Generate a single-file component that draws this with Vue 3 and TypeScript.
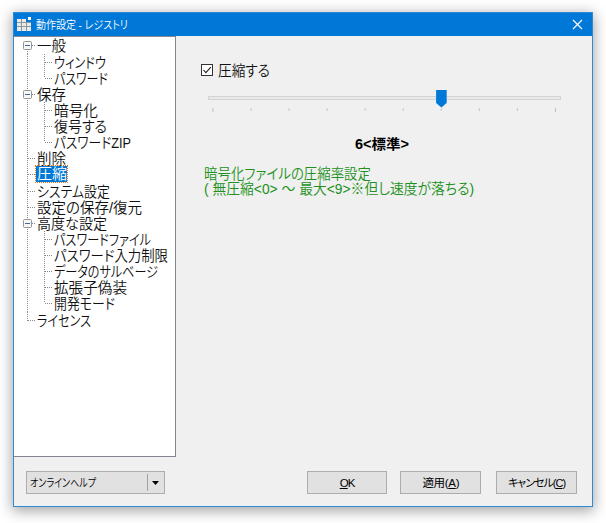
<script setup lang="ts">
import { h, ref } from 'vue'

interface TextProps { t: string; w: number; s?: number }

// Condensed UI label: the line is fitted to the width of the dialog's bitmap font.
const Label = (props: TextProps) => {
  const size = props.s ?? 14.5
  return h('svg', { class: 'label', width: props.w, height: 16 }, [
    h('text', { x: 0, y: 8 + size * 0.38, 'font-size': size, fill: 'currentColor', textLength: props.w, lengthAdjust: 'spacingAndGlyphs' }, props.t),
  ])
}
Label.props = ['t', 'w', 's']

interface Node { text: string; w: number; child?: boolean; open?: boolean; last?: boolean }
const nodes: Node[] = [
  { text: '一般', w: 29, open: true },
  { text: 'ウィンドウ', w: 52, child: true },
  { text: 'パスワード', w: 54, child: true, last: true },
  { text: '保存', w: 29, open: true },
  { text: '暗号化', w: 44, child: true },
  { text: '復号する', w: 53, child: true },
  { text: 'パスワードZIP', w: 77, child: true, last: true },
  { text: '削除', w: 29 },
  { text: '圧縮', w: 30 },
  { text: 'システム設定', w: 73 },
  { text: '設定の保存/復元', w: 105 },
  { text: '高度な設定', w: 70, open: true },
  { text: 'パスワードファイル', w: 97, child: true },
  { text: 'パスワード入力制限', w: 114, child: true },
  { text: 'データのサルベージ', w: 104, child: true },
  { text: '拡張子偽装', w: 73, child: true },
  { text: '開発モード', w: 61, child: true, last: true },
  { text: 'ライセンス', w: 54 },
]
const selected = ref('圧縮')
const compress = ref(true)
const level = ref(6)
</script>

<template>
  <div class="desktop">
    <section class="window">
      <header class="titlebar">
        <svg class="logo" width="15" height="15" viewBox="0 0 15 15">
          <g fill="#eceae6">
            <path d="M0 2h4v3H0zM5 2h4v3H5zM0 6h4v3H0zM5 6h4v3H5zM10 6h4v3h-4zM0 10h4v4H0zM5 10h4v4H5zM10 10h4v4h-4z" />
            <path d="M11 0h3v3h-3z" fill="#fff" />
          </g>
          <path d="M4.5 2v12M9.5 5v9M0 5.5h14M0 9.5h14" stroke="#8c969e" stroke-width="1" />
        </svg>
        <Label class="title" t="動作設定 - レジストリ" :w="92" :s="11.7" />
        <svg class="close" width="11" height="11" viewBox="0 0 11 11"><path d="M1 1l9 9M10 1l-9 9" stroke="#fff" stroke-width="1.15" /></svg>
      </header>
      <div class="body">
        <nav class="tree">
          <div v-for="(n, i) in nodes" :key="n.text" class="node" :class="{ child: n.child, active: n.text === selected }" @click="selected = n.text">
            <svg class="guide" :width="n.child ? 38 : 21" height="16.14">
              <g stroke="#8a8a8a" stroke-width="1" stroke-dasharray="1 1" fill="none">
                <path :d="`M13.5 ${i === 0 ? 8 : 0}V${i === nodes.length - 1 ? 9 : 17}`" />
                <path v-if="!n.child" d="M14 8.5H21" />
                <path v-else :d="`M30.5 0V${n.last ? 8 : 17}M31 8.5H38`" />
              </g>
              <template v-if="n.open">
                <rect x="9.5" y="4.5" width="8" height="8" rx="1" fill="#f7f7f7" stroke="#969696" />
                <path d="M11 8.5h5" stroke="#4664a8" />
              </template>
            </svg>
            <span class="caption"><Label :t="n.text" :w="n.w" /></span>
          </div>
        </nav>
        <main class="pane">
          <div class="check" @click="compress = !compress">
            <svg width="12" height="12" viewBox="0 0 12 12">
              <rect x=".5" y=".5" width="11" height="11" fill="#fff" stroke="#333" />
              <path v-if="compress" d="M2.5 6l2.4 2.6L9.8 3.2" fill="none" stroke="#222" stroke-width="1.1" />
            </svg>
            <Label t="圧縮する" :w="52" />
          </div>
          <svg class="slider" width="354" height="24" viewBox="0 0 354 24">
            <rect x=".5" y="6.5" width="352" height="3" fill="#e7eaea" stroke="#d3d3d3" />
            <path v-for="k in 10" :key="k" :d="`M${5 + (k - 1) * 38.05} ${k === 1 || k === 10 ? 18 : 18.4}v${k === 1 || k === 10 ? 4 : 2.4}`" stroke="#bdbdbd" />
            <path :d="`M${5 + level * 38.05 - 5.2} 0h10.6v13l-5.3 4.5-5.3-4.5z`" fill="#0078d7" />
          </svg>
          <div class="value"><Label :t="`${level}<標準>`" :w="54" :s="14" /></div>
          <div class="note">
            <Label t="暗号化ファイルの圧縮率設定" :w="167" :s="14.3" />
            <Label t="( 無圧縮<0> ～ 最大<9>※但し速度が落ちる)" :w="270" :s="14.3" />
          </div>
        </main>
      </div>
      <footer class="footer">
        <div class="btn help">
          <Label t="オンラインヘルプ" :w="66" :s="11.8" />
          <span class="drop"><svg width="7" height="4" viewBox="0 0 7 4"><path d="M0 0h7L3.5 4z" /></svg></span>
        </div>
        <div class="btn ok"><span class="key tight"><u>O</u>K</span></div>
        <div class="btn apply"><span class="key">適用(<u>A</u>)</span></div>
        <div class="btn"><span class="key cancel">キャンセル(<u>C</u>)</span></div>
      </footer>
    </section>
  </div>
</template>

<style>
body { background: #fff; }
</style>
<style scoped>
.desktop { box-sizing: border-box; width: 606px; height: 523px; padding: 12px 0 0 13px; overflow: hidden; font-family: "Liberation Sans", "Noto Sans CJK JP", sans-serif; color: #111; }
.window { box-sizing: border-box; display: flex; flex-direction: column; width: 580px; height: 495px; border: 1px solid #2f8ad5; background: #f0f0f0; box-shadow: 0 3px 13px 1px rgba(0, 0, 0, .36); }
.label { display: block; flex: none; overflow: visible; font-feature-settings: "palt"; font-weight: 350; }
.titlebar { display: flex; align-items: center; height: 23px; padding: 0 9px 0 3px; background: #0078d7; color: #fff; flex: none; }
.title { margin-left: 4px; }
.close { margin-left: auto; }
.body { display: flex; height: 421px; flex: none; }
.tree { box-sizing: border-box; width: 162px; height: 421px; padding-top: .4px; border: solid #828790; border-width: 1px 1px 1px 0; background: #fff; flex: none; }
.node { display: flex; height: 16.14px; }
.guide { display: block; flex: none; }
.caption { display: block; height: 16px; padding: 0 1px 0 2px; }
.active .caption { box-sizing: border-box; height: 16px; padding: 0 0 0 1px; margin-left: 1px; outline: 1px dotted #e07820; background: #0078d7; color: #fff; }
.active .label { height: 15px; margin-top: -1px; }
.pane { display: flex; flex-direction: column; width: 416px; }
.check { display: flex; align-items: center; gap: 5px; padding: 26px 0 0 25px; }
.slider { display: block; margin: 12px 0 0 32px; flex: none; }
.value { margin: 22px 0 0 179px; color: #000; }
.value .label { font-weight: 700; }
.note { display: flex; flex-direction: column; margin: 14px 0 0 28px; color: #219021; }
.note .label { height: 15px; }
.footer { display: flex; padding: 14px 0 0 12px; }
.btn { box-sizing: border-box; display: flex; align-items: center; justify-content: center; width: 81px; height: 23px; margin-right: 15px; border: 1px solid #adadad; background: #e1e1e1; color: #000; }
.key { font-size: 11.5px; line-height: 16px; letter-spacing: -.3px; white-space: nowrap; font-feature-settings: "palt"; }
.tight { letter-spacing: -1px; }
.cancel { font-size: 11px; letter-spacing: -1px; }
.help { justify-content: space-between; width: 139px; margin-right: 142px; padding-left: 3px; }
.ok { margin-right: 13px; }
.drop { display: flex; align-items: center; justify-content: center; width: 16px; height: 17px; border-left: 1px solid #a0a0a0; }
</style>
